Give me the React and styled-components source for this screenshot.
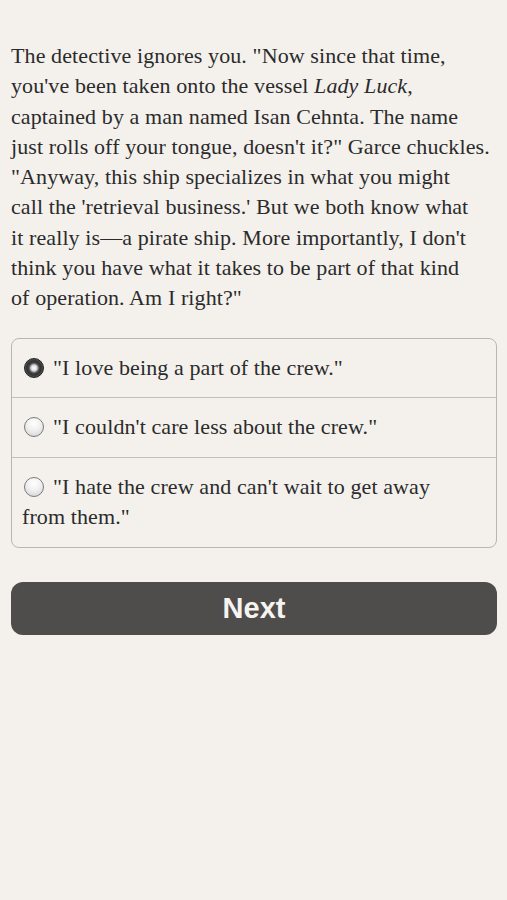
import React, { useState } from "react";
import styled, { createGlobalStyle } from "styled-components";

const Global = createGlobalStyle`
  html, body {
    margin: 0;
    padding: 0;
    background: #f4f1ed;
  }
`;

const options = [
  "\"I love being a part of the crew.\"",
  "\"I couldn't care less about the crew.\"",
  "\"I hate the crew and can't wait to get away from them.\"",
];

const App = () => {
  const [choice, setChoice] = useState(0);

  return (
    <Page>
      <Global />
      <Story>
        The detective ignores you. "Now since that time,
        <br />
        you've been taken onto the vessel <em>Lady Luck</em>,
        <br />
        captained by a man named Isan Cehnta. The name
        <br />
        just rolls off your tongue, doesn't it?" Garce chuckles.
        <br />
        "Anyway, this ship specializes in what you might
        <br />
        call the 'retrieval business.' But we both know what
        <br />
        it really is—a pirate ship. More importantly, I don't
        <br />
        think you have what it takes to be part of that kind
        <br />
        of operation. Am I right?"
      </Story>
      <Choices>
        {options.map((text, i) => (
          <Choice key={i} onClick={() => setChoice(i)}>
            <Radio $checked={choice === i} />
            {text}
          </Choice>
        ))}
      </Choices>
      <NextButton>Next</NextButton>
    </Page>
  );
};

export default App;

const Page = styled.div`
  min-height: 900px;
  box-sizing: border-box;
  padding: 41px 10px 0 11px;
  font-family: "Palatino Linotype", Palatino, "Liberation Serif", serif;
  color: #2b2b2b;
`;

const Story = styled.p`
  margin: 0 -6px 0 0;
  font-size: 22px;
  letter-spacing: 0.1px;
  line-height: 30.3px;
  em {
    font-style: italic;
  }
`;

const Choices = styled.div`
  margin-top: 24px;
  border: 1px solid #b8b6b3;
  border-radius: 8px;
  overflow: hidden;
`;

const Choice = styled.div`
  padding: 14px 30px 14.4px 10px;
  font-size: 22px;
  letter-spacing: 0.1px;
  line-height: 30.3px;
  cursor: pointer;
  & + & {
    border-top: 1.5px solid #c2c0bc;
  }
`;

const Radio = styled.span`
  display: inline-block;
  box-sizing: border-box;
  width: 20px;
  height: 20px;
  margin: 0 9px 0 2px;
  vertical-align: -3px;
  border-radius: 50%;
  border: 1px solid ${(p) => (p.$checked ? "#1f1f1f" : "#7a7a7a")};
  background: ${(p) =>
    p.$checked
      ? "radial-gradient(circle, #f2f2f2 0 2px, #b5b5b5 3.5px, #4a4a4a 5px, #2f2f2f 7px, #555 9px)"
      : "radial-gradient(circle at 50% 30%, #ffffff, #f0f0f0 45%, #cfcfcf)"};
`;

const NextButton = styled.button`
  display: block;
  width: 100%;
  height: 53px;
  margin-top: 34px;
  border: none;
  border-radius: 12px;
  background: #4f4d4b;
  color: #f6f4f1;
  font-family: "Liberation Sans", Arial, sans-serif;
  font-weight: 700;
  font-size: 29px;
  cursor: pointer;
`;
